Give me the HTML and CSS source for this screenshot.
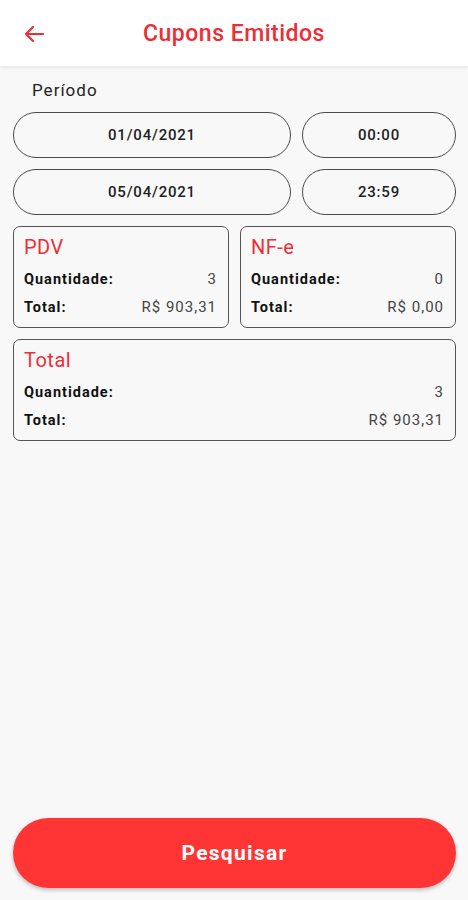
FILE: index.html
```html
<!DOCTYPE html>
<html lang="pt-BR">
<head>
    <meta charset="UTF-8">
    <meta name="viewport" content="width=device-width, initial-scale=1.0">
    <title>Cupons Emitidos</title>
    <link rel="stylesheet" href="styles.css">
</head>
<body>
    <div class="screen">
        <header class="topbar">
            <button class="back" aria-label="Voltar">
                <svg width="24" height="24" viewBox="0 0 24 24">
                    <path d="M21 12H4M11 5l-7 7 7 7" fill="none" stroke="#ee2d35" stroke-width="2.2" stroke-linecap="round" stroke-linejoin="round"/>
                </svg>
            </button>
            <h1>Cupons Emitidos</h1>
        </header>

        <main class="content">
            <div class="period-label">Período</div>
            <div class="pill-row">
                <div class="pill">01/04/2021</div>
                <div class="pill">00:00</div>
            </div>
            <div class="pill-row">
                <div class="pill">05/04/2021</div>
                <div class="pill">23:59</div>
            </div>

            <div class="card-row">
                <div class="card">
                    <div class="card-title">PDV</div>
                    <div class="line"><span class="label">Quantidade:</span><span class="value">3</span></div>
                    <div class="line"><span class="label">Total:</span><span class="value">R$ 903,31</span></div>
                </div>
                <div class="card">
                    <div class="card-title">NF-e</div>
                    <div class="line"><span class="label">Quantidade:</span><span class="value">0</span></div>
                    <div class="line"><span class="label">Total:</span><span class="value">R$ 0,00</span></div>
                </div>
            </div>
            <div class="card">
                <div class="card-title">Total</div>
                <div class="line"><span class="label">Quantidade:</span><span class="value">3</span></div>
                <div class="line"><span class="label">Total:</span><span class="value">R$ 903,31</span></div>
            </div>
        </main>

        <div class="footer">
            <button class="search">Pesquisar</button>
        </div>
    </div>
</body>
</html>
```

FILE: styles.css
```css
* {
    box-sizing: border-box;
}
body {
    margin: 0;
    font-family: Roboto, "Liberation Sans", sans-serif;
    background-color: #f8f8f8;
    color: #111;
}
.screen {
    height: 900px;
    display: flex;
    flex-direction: column;
}
.topbar {
    height: 67px;
    background-color: #fff;
    display: flex;
    align-items: center;
    justify-content: center;
    position: relative;
    box-shadow: 0 1px 3px rgba(0, 0, 0, 0.08);
    border-bottom: 1px solid #ececec;
}
.topbar h1 {
    margin: 0;
    font-size: 23px;
    font-weight: 500;
    letter-spacing: 0.5px;
    color: #ee2d35;
}
.back {
    position: absolute;
    left: 22px;
    top: 22px;
    padding: 0;
    border: none;
    background: none;
    display: flex;
}
.content {
    flex: 1;
    padding: 12px 12px 0 13px;
    display: flex;
    flex-direction: column;
    gap: 11px;
}
.period-label {
    font-size: 17px;
    line-height: 22px;
    letter-spacing: 1px;
    margin: 0 0 0 19px;
    color: #222;
}
.pill-row {
    display: grid;
    grid-template-columns: 1fr 154px;
    gap: 11px;
}
.pill {
    height: 46px;
    border: 1.5px solid #4a4a4a;
    border-radius: 23px;
    display: flex;
    align-items: center;
    justify-content: center;
    font-size: 15px;
    font-weight: 500;
    letter-spacing: 0.8px;
    color: #222;
}
.card-row {
    display: grid;
    grid-template-columns: 1fr 1fr;
    gap: 11px;
}
.card {
    height: 102px;
    border: 1.5px solid #555;
    border-radius: 7px;
    padding: 8px 11px 0 10px;
}
.card-title {
    font-size: 20px;
    line-height: 24px;
    letter-spacing: 0.5px;
    color: #ee2d35;
    margin-bottom: 8px;
}
.line {
    display: flex;
    justify-content: space-between;
    align-items: center;
    height: 24px;
    margin-bottom: 4px;
}
.label {
    font-size: 14.5px;
    font-weight: 700;
    letter-spacing: 1px;
    color: #111;
}
.value {
    font-size: 15px;
    letter-spacing: 1px;
    color: #444;
}
.footer {
    padding: 0 12px 12px 13px;
}
.search {
    width: 100%;
    height: 70px;
    border: none;
    border-radius: 35px;
    background-color: #ff3535;
    color: #fff;
    font-family: Roboto, "Liberation Sans", sans-serif;
    font-size: 21px;
    font-weight: 700;
    letter-spacing: 1.3px;
    box-shadow: 0 2px 4px rgba(0, 0, 0, 0.25);
}
```
